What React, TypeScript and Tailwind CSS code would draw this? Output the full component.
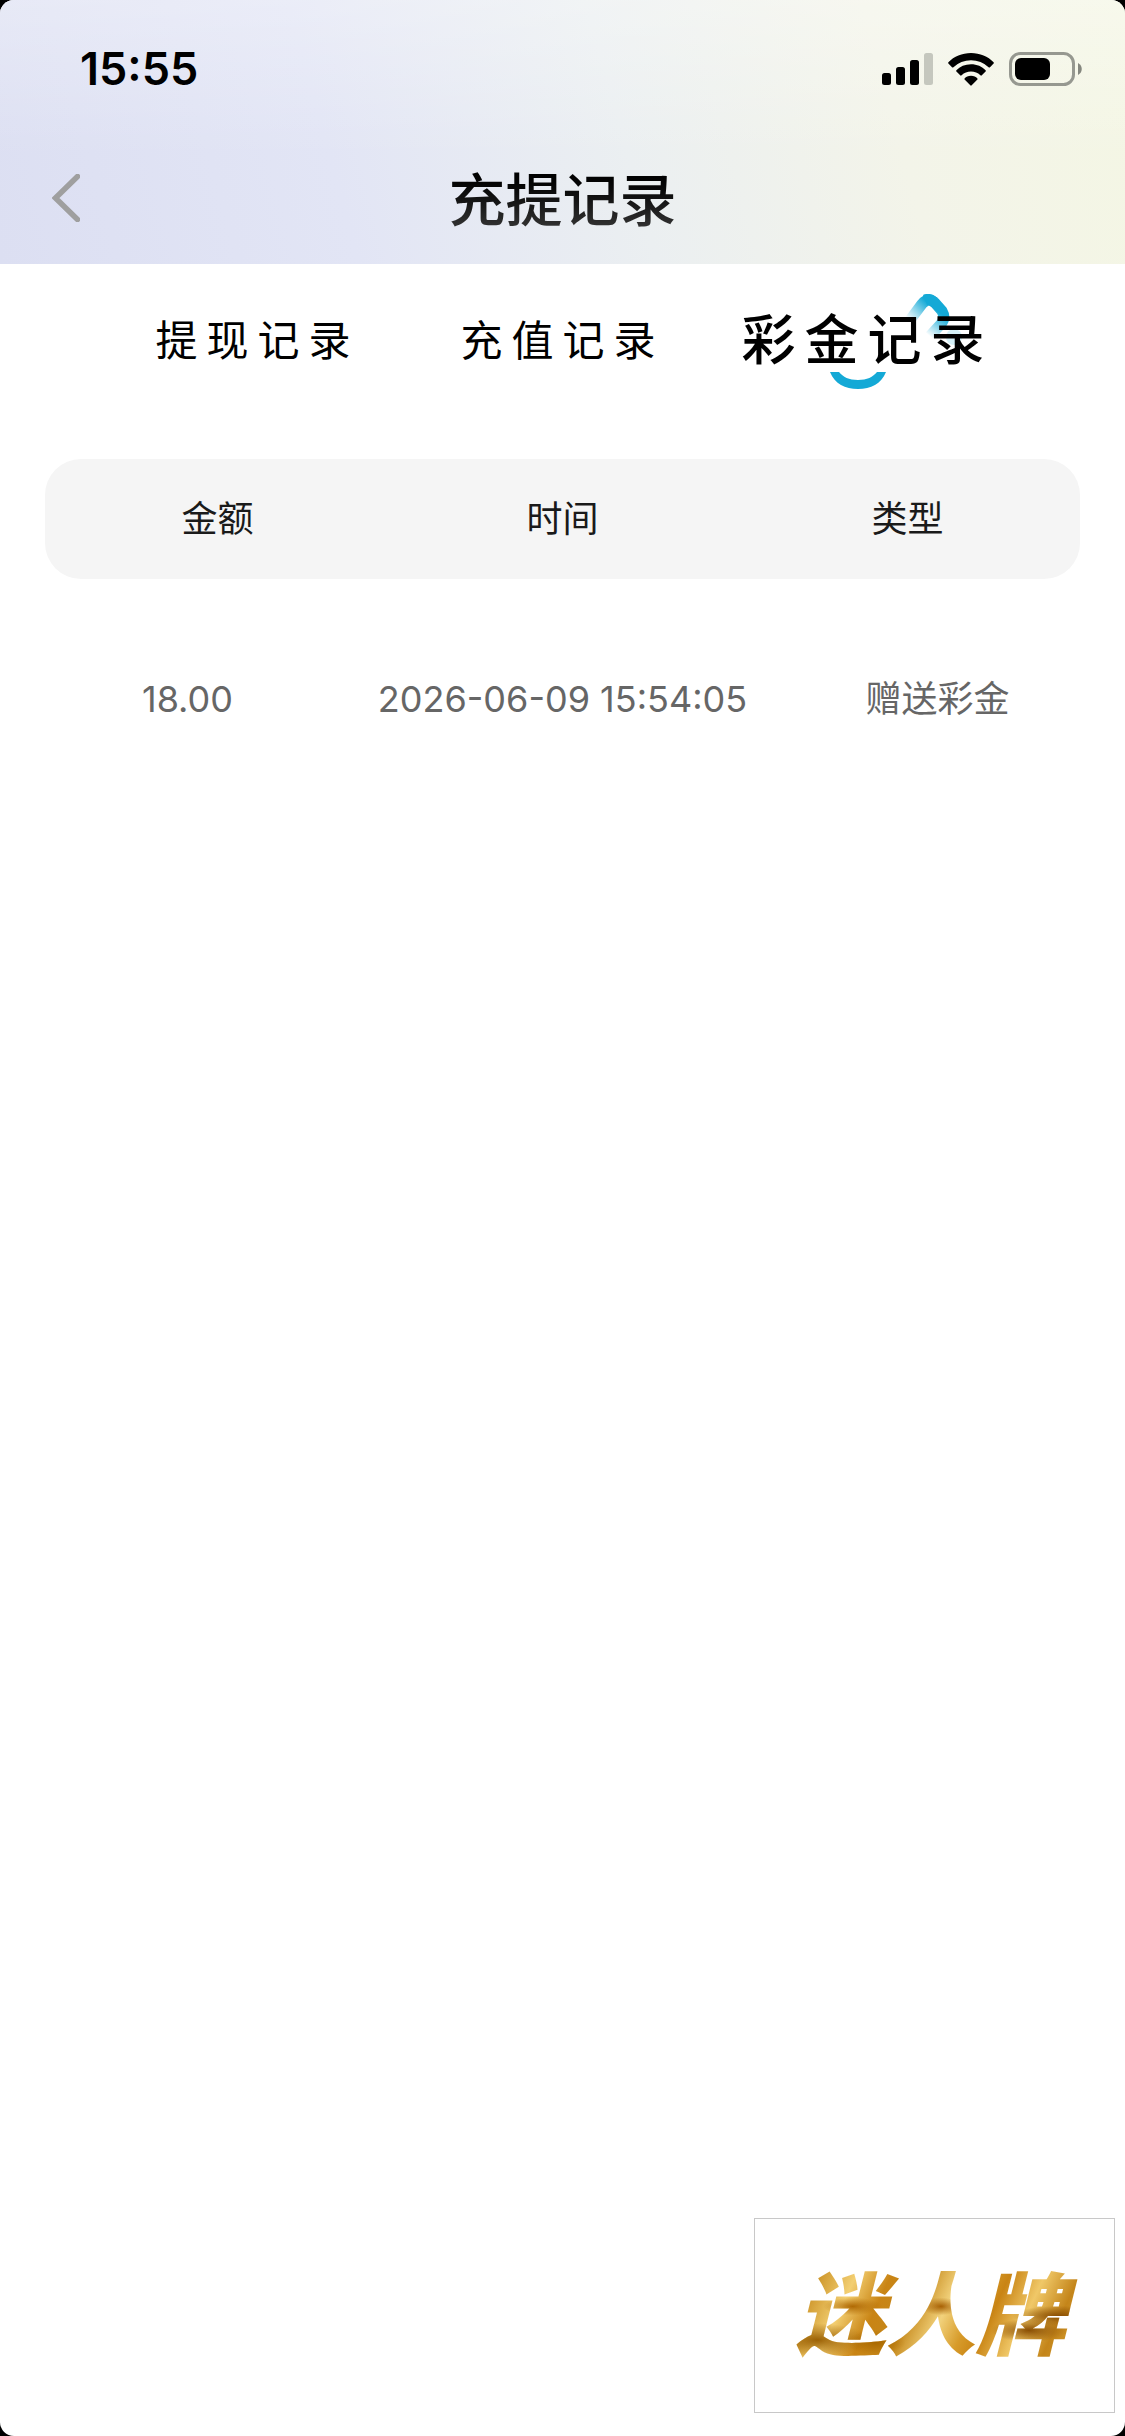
import { useState } from 'react'

const TABS = ['提现记录', '充值记录', '彩金记录']

const COLUMNS = ['金额', '时间', '类型']

const RECORDS = [
  { amount: '18.00', time: '2026-06-09 15:54:05', type: '赠送彩金' },
]

function StatusBar() {
  return (
    <div className="flex items-center justify-between pt-[46px] pl-20 pr-[43px]">
      <span className="font-[Inter] text-[45px] leading-[46px] font-semibold text-black">15:55</span>
      <div className="flex items-center gap-[15px]">
        <svg className="h-8 w-[51px]" viewBox="0 0 51 32" aria-hidden="true">
          <rect x="0" y="20" width="9" height="12" rx="2.5" />
          <rect x="14" y="14" width="9" height="18" rx="2.5" />
          <rect x="28" y="7" width="9" height="25" rx="2.5" />
          <rect x="42" y="0" width="9" height="32" rx="2.5" fill="#c5c7be" />
        </svg>
        <svg className="h-[33px] w-[46px]" viewBox="0 0 46 33" aria-hidden="true">
          <path d="M23 0C32 0 40 3.500 45.600 9.200Q46.200 10 45.600 10.600L42 14.200Q41.300 14.800 40.600 14.200A25.500 25.500 0 0 0 5.400 14.200Q4.700 14.800 4 14.200L.4 10.600Q-.2 10 .4 9.200C6 3.500 14 0 23 0Z" />
          <path d="M23 11.300C29 11.300 34 13.500 37.600 17.300Q38.200 18 37.600 18.600L33.800 22.300Q33.100 23 32.400 22.300A13.600 13.600 0 0 0 13.600 22.300Q12.900 23 12.200 22.300L8.400 18.600Q7.800 18 8.400 17.300C12 13.500 17 11.300 23 11.300Z" />
          <path d="M23 22.800C25.800 22.800 28 23.900 29.400 25.400Q30 26 29.400 26.600L23.700 32.300Q23 33 22.300 32.300L16.600 26.600Q16 26 16.600 25.400C18 23.900 20.200 22.800 23 22.800Z" />
        </svg>
        <svg className="h-[34px] w-[73px]" viewBox="0 0 73 34" aria-hidden="true">
          <rect x="1.500" y="1.500" width="63" height="31" rx="10" fill="none" stroke="#969890" strokeWidth="3" />
          <rect x="6" y="6" width="35" height="22" rx="6" />
          <path d="M69 11C74 13.500 74 20.500 69 23Z" fill="#85877f" />
        </svg>
      </div>
    </div>
  )
}

function NavBar() {
  return (
    <div className="relative flex items-center justify-center pt-[67px] pb-[21px]">
      <button type="button" aria-label="返回" className="absolute left-[52px] top-[82px]">
        <svg className="h-12 w-7" viewBox="0 0 28 48" fill="none" aria-hidden="true">
          <path d="M25.500 2.500L3.500 24L25.500 45.500" stroke="#9f9f9f" strokeWidth="5.500" strokeLinecap="round" />
        </svg>
      </button>
      <h1 className="bg-linear-to-b from-black to-[#454545] bg-clip-text text-[57px] leading-[84px] font-medium text-transparent">
        充提记录
      </h1>
    </div>
  )
}

function TabMark() {
  return (
    <svg className="absolute left-[88px] top-[1px] -z-10 h-24 w-[144px]" viewBox="0 0 144 96" fill="none" aria-hidden="true">
      <defs>
        <linearGradient id="markLeft" x1="78" y1="26" x2="97" y2="8" gradientUnits="userSpaceOnUse">
          <stop stopColor="#14a9d6" stopOpacity="0" />
          <stop offset="1" stopColor="#14a9d6" />
        </linearGradient>
        <linearGradient id="markRight" x1="114" y1="22" x2="99" y2="42" gradientUnits="userSpaceOnUse">
          <stop stopColor="#14a9d6" />
          <stop offset="1" stopColor="#14a9d6" stopOpacity="0" />
        </linearGradient>
      </defs>
      <path d="M80 26L92 10Q98 3 104 8" stroke="url(#markLeft)" strokeWidth="11" />
      <path d="M95 6Q100 4 105 9L112 17Q116 24 111 30L100 42" stroke="url(#markRight)" strokeWidth="11" />
      <circle cx="124" cy="43" r="8" fill="#d5f1f9" />
      <path d="M0 78C5 90 15 95 28 95C41 95 51 90 56 78H47C43 83 37 86 28 86C19 86 13 83 9 78Z" fill="#14a9d6" />
    </svg>
  )
}

export default function App() {
  const [active, setActive] = useState(2)

  return (
    <div className="bg-black font-['Inter','Noto_Sans_CJK_SC',sans-serif]">
      <div className="min-h-screen overflow-hidden rounded-[14px] bg-white">
        <header className="bg-[linear-gradient(to_bottom,rgba(255,255,255,0.3),rgba(255,255,255,0)_60%),linear-gradient(75deg,#dcdff2_0%,#e2e5f5_30%,#ebeff1_55%,#f3f4e9_78%,#f4f6e4_100%)]">
          <StatusBar />
          <NavBar />
        </header>

        <nav className="grid grid-cols-3 px-[105px] pt-[29px]">
          {TABS.map((tab, i) => (
            <button
              key={tab}
              type="button"
              onClick={() => setActive(i)}
              className="flex h-24 items-center justify-center text-black"
            >
              {i === active ? (
                <span className="relative isolate text-[54px] leading-[96px] font-medium tracking-[9px] whitespace-nowrap">
                  <TabMark />
                  {tab}
                </span>
              ) : (
                <span className="text-[42px] leading-[96px] tracking-[9px] whitespace-nowrap">{tab}</span>
              )}
            </button>
          ))}
        </nav>

        <table className="mt-[70px] block">
          <thead className="mx-[45px] block rounded-[36px] bg-[#f5f5f5]">
            <tr className="grid h-[120px] grid-cols-3 items-center">
              {COLUMNS.map((name) => (
                <th key={name} scope="col" className="text-center text-[36px] leading-[54px] font-normal text-[#1a1a1a]">
                  {name}
                </th>
              ))}
            </tr>
          </thead>
          <tbody className="block pt-[60px]">
            {RECORDS.map((row) => (
              <tr
                key={row.time}
                className="grid h-[120px] grid-cols-3 items-center text-center text-[36px] leading-[54px] text-[#666666]"
              >
                <td>{row.amount}</td>
                <td className="whitespace-nowrap">{row.time}</td>
                <td>{row.type}</td>
              </tr>
            ))}
          </tbody>
        </table>

        {/* floating brand badge */}
        <a
          href="#brand"
          className="fixed right-[10px] bottom-[23px] flex h-[195px] w-[361px] items-center justify-center border border-[#c8c8c8] bg-white"
        >
          <span className="bg-[radial-gradient(ellipse_at_10%_70%,#9c6206_0%,transparent_14%),radial-gradient(ellipse_at_30%_72%,#a96800_0%,transparent_10%),radial-gradient(ellipse_at_22%_42%,#b06a04_0%,transparent_9%),radial-gradient(ellipse_at_52%_42%,#a86205_0%,transparent_9%),radial-gradient(ellipse_at_92%_50%,#8a4f04_0%,transparent_12%),radial-gradient(ellipse_at_82%_62%,#8a4f04_0%,transparent_11%),linear-gradient(115deg,#b57a14_0%,#c98f22_10%,#f3cf72_22%,#c98414_32%,#c4871a_42%,#f2d27c_52%,#d79b2a_60%,#c98414_66%,#f0c868_76%,#c4851a_86%,#dda93c_100%)] bg-clip-text pr-4 pl-2 text-[90px] leading-[120px] font-black text-transparent italic">
            迷人牌
          </span>
        </a>
      </div>
    </div>
  )
}
